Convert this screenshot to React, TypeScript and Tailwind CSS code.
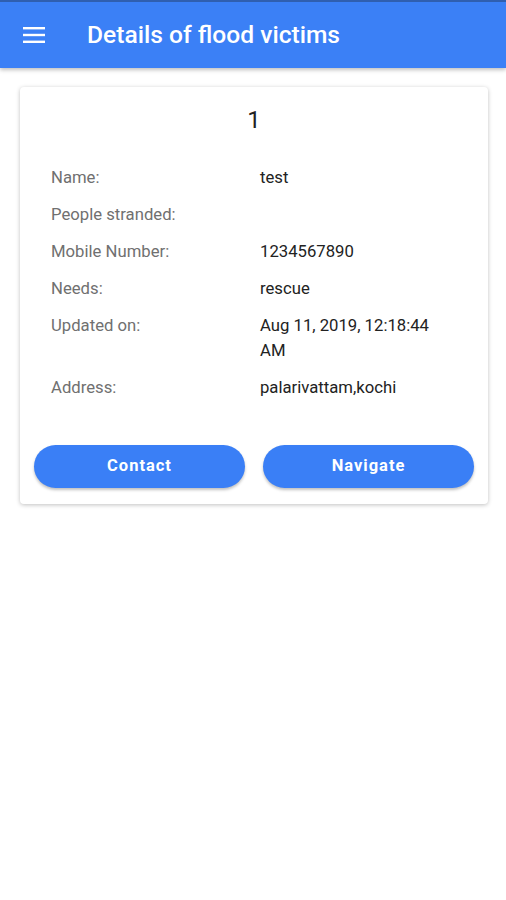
import React from "react";

const rows: [string, string][] = [
  ["Name:", "test"],
  ["People stranded:", ""],
  ["Mobile Number:", "1234567890"],
  ["Needs:", "rescue"],
  ["Updated on:", "Aug 11, 2019, 12:18:44 AM"],
  ["Address:", "palarivattam,kochi"],
];

export default function App() {
  return (
    <div className="w-[506px] min-h-[900px] bg-white" style={{ fontFamily: "Roboto, 'Noto Sans', sans-serif" }}>
      <div className="h-[68px] bg-[#3b80f6] border-t-2 border-[#2f5fb0] flex items-center shadow-[0_2px_4px_rgba(0,0,0,0.25)] relative z-10">
        <div className="w-[87px] flex justify-start pl-[23px]">
          <svg width="22" height="16" viewBox="0 0 22 16">
            <rect x="0" y="0" width="22" height="2.4" fill="white" />
            <rect x="0" y="6.8" width="22" height="2.4" fill="white" />
            <rect x="0" y="13.6" width="22" height="2.4" fill="white" />
          </svg>
        </div>
        <div className="text-white text-[24.6px] font-medium leading-none">Details of flood victims</div>
      </div>
      <div className="pt-[19px] px-[20px]">
        <div className="w-[468px] bg-white rounded-[4px] shadow-[0_1px_4px_rgba(0,0,0,0.25)] pt-[20px] pb-[16px] px-[14px]">
          <div className="text-center text-[24px] leading-[26px] text-[#222]">1</div>
          <div className="mt-[32px] grid grid-cols-[209px_184px] gap-y-[12px] pl-[17px]">
            {rows.map(([k, v]) => (
              <React.Fragment key={k}>
                <div className="text-[16.7px] leading-[25px] text-[#707070]">{k}</div>
                <div className="text-[16.7px] leading-[25px] text-[#222]">{v}</div>
              </React.Fragment>
            ))}
          </div>
          <div className="mt-[45px] grid grid-cols-2 gap-[18px]">
            <button className="h-[43px] rounded-full bg-[#3a7ff6] text-white font-bold text-[16.5px] tracking-[0.06em] shadow-[0_2px_3px_rgba(0,0,0,0.25)]">Contact</button>
            <button className="h-[43px] rounded-full bg-[#3a7ff6] text-white font-bold text-[16.5px] tracking-[0.06em] shadow-[0_2px_3px_rgba(0,0,0,0.25)]">Navigate</button>
          </div>
        </div>
      </div>
    </div>
  );
}
